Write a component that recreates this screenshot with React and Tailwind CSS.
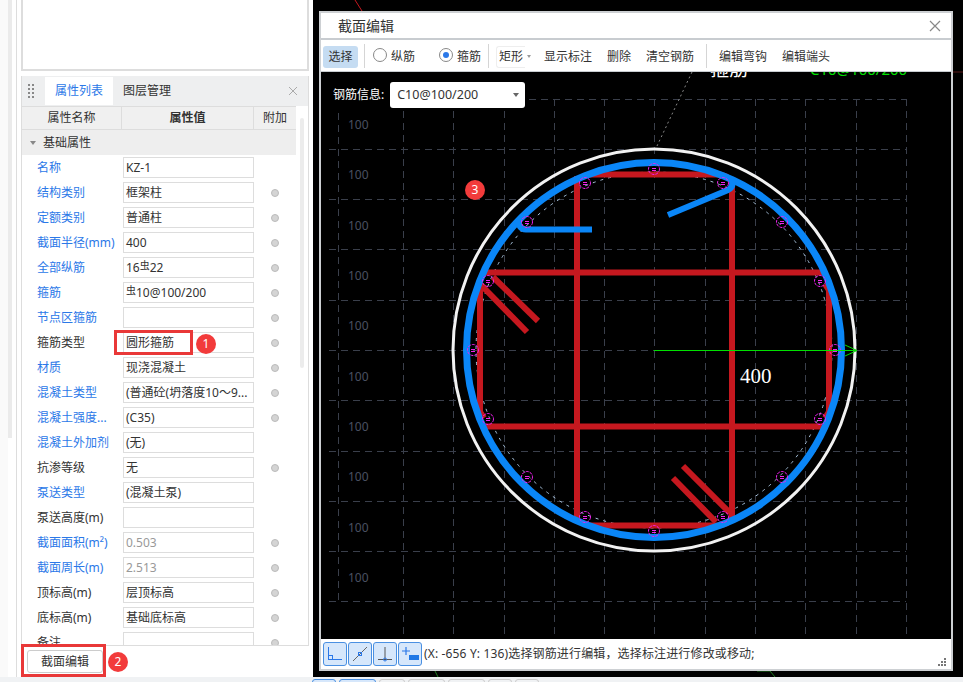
const font = { fontFamily: '"Noto Sans", "Noto Sans CJK SC", sans-serif' }

const rows = [
  { label: '名称', value: 'KZ-1', blue: true },
  { label: '结构类别', value: '框架柱', blue: true, dot: true },
  { label: '定额类别', value: '普通柱', blue: true, dot: true },
  { label: '截面半径(mm)', value: '400', blue: true, dot: true },
  { label: '全部纵筋', value: '16', steel: '22', blue: true, dot: true },
  { label: '箍筋', value: '', steel: '10@100/200', blue: true, dot: true },
  { label: '节点区箍筋', value: '', blue: true, dot: true },
  { label: '箍筋类型', value: '圆形箍筋', dot: true },
  { label: '材质', value: '现浇混凝土', blue: true, dot: true },
  { label: '混凝土类型', value: '(普通砼(坍落度10～9...', blue: true, dot: true },
  { label: '混凝土强度...', value: '(C35)', blue: true, dot: true },
  { label: '混凝土外加剂', value: '(无)', blue: true },
  { label: '抗渗等级', value: '无', dot: true },
  { label: '泵送类型', value: '(混凝土泵)', blue: true },
  { label: '泵送高度(m)', value: '' },
  { label: '截面面积(m²)', value: '0.503', blue: true, dot: true, muted: true },
  { label: '截面周长(m)', value: '2.513', blue: true, dot: true, muted: true },
  { label: '顶标高(m)', value: '层顶标高', dot: true },
  { label: '底标高(m)', value: '基础底标高', dot: true },
  { label: '备注', value: '', dot: true },
]

function PropertyRow({ row }) {
  return (
    <div className="grid h-[25px] shrink-0 grid-cols-[101px_131px_42px] items-center text-[12px]">
      <span className={`pl-[15px] whitespace-nowrap ${row.blue ? 'text-[#2b78e8]' : 'text-[#333333]'}`}>{row.label}</span>
      <div
        className={`flex h-[21px] items-center overflow-hidden whitespace-nowrap border border-[#dddddd] bg-white pl-[2px] ${
          row.muted ? 'text-[#999999]' : 'text-[#333333]'
        }`}
      >
        {row.value}
        {row.steel !== undefined && (
          <>
            <span className="relative top-[-3px] text-[10px] leading-none">虫</span>
            {row.steel}
          </>
        )}
      </div>
      {row.dot ? <span className="ml-[17px] h-[8px] w-[8px] rounded-full border border-[#bbbbbb] bg-[#d4d4d4]" /> : <span />}
    </div>
  )
}

function DragDots() {
  return (
    <div className="grid grid-cols-[2px_2px] gap-[2px]">
      {[0, 1, 2, 3, 4, 5, 6, 7].map((n) => (
        <span key={n} className="h-[2px] w-[2px] bg-[#888888]" />
      ))}
    </div>
  )
}

function LeftPanel() {
  return (
    <div className="flex h-full w-[313px] shrink-0 bg-white">
      <div className="h-full w-[8px] shrink-0 bg-[#fafafa]" />
      <div className="h-[438px] w-[4px] shrink-0 bg-[#ebebeb]" />
      <div className="h-full w-[4px] shrink-0" />
      <div className="h-full w-[1px] shrink-0 bg-[#dddddd]" />
      <div className="h-full w-[4px] shrink-0" />
      <div className="flex w-[288px] shrink-0 flex-col">
        <div className="h-[71px] shrink-0 border-x-2 border-b-2 border-[#dddddd] bg-white" />
        <div className="mt-[5px] flex h-[570px] shrink-0 flex-col overflow-hidden border-x border-b border-[#dddddd]">
          <div className="flex h-[30px] shrink-0 items-center bg-[#eeeff0] text-[12px] text-[#333333]">
            <div className="ml-[6px] w-[17px]">
              <DragDots />
            </div>
            <div className="flex h-[28px] w-[68px] items-center justify-center bg-white text-[#2b78e8]">属性列表</div>
            <div className="ml-[10px]">图层管理</div>
            <svg className="ml-auto mr-[10px]" width="10" height="10" viewBox="0 0 10 10">
              <path d="M1 1l8 8M9 1l-8 8" stroke="#aaaaaa" strokeWidth="1" fill="none" />
            </svg>
          </div>
          <div className="flex min-h-0 flex-1">
            <div className="flex w-[274px] shrink-0 flex-col">
              <div className="grid h-[24px] shrink-0 grid-cols-[100px_132px_42px] items-center border-y border-[#dddddd] bg-[#f0f0f0] text-center text-[12px] text-[#333333]">
                <span className="border-r border-[#dddddd] leading-[22px]">属性名称</span>
                <span className="border-r border-[#dddddd] font-bold leading-[22px]">属性值</span>
                <span>附加</span>
              </div>
              <div className="flex h-[25px] shrink-0 items-center bg-[#eeeeee] pl-[8px] text-[12px] text-[#333333]">
                <span className="mr-[7px] h-0 w-0 border-x-[3px] border-t-[4px] border-x-transparent border-t-[#888888]" />
                基础属性
              </div>
              {rows.map((row) => (
                <PropertyRow key={row.label} row={row} />
              ))}
            </div>
            <div className="ml-[4px] mt-[12px] h-[250px] w-[4px] shrink-0 rounded-full bg-[#ececec]" />
          </div>
        </div>
        <div className="flex flex-1 items-center pl-[6px]">
          <button className="h-[23px] w-[76px] rounded-[3px] border border-[#cccccc] bg-white text-[12px] text-[#333333]">
            截面编辑
          </button>
        </div>
      </div>
    </div>
  )
}

function ToolText({ children, className = '' }) {
  return <span className={`whitespace-nowrap text-[12px] text-[#333333] ${className}`}>{children}</span>
}

function Divider({ className = '' }) {
  return <span className={`relative top-[-1px] h-[24px] w-[1px] shrink-0 bg-[#d5d5d5] ${className}`} />
}

function Toolbar() {
  return (
    <div className="flex h-[34px] shrink-0 items-center border-t-2 border-b border-[#c8ccd0] bg-white pl-[2px] pt-[2px]">
      <span className="flex h-[22px] w-[35px] items-center justify-center rounded-[3px] bg-[#c5dcf2] text-[12px] text-[#333333]">选择</span>
      <Divider className="ml-[6px]" />
      <span className="relative top-[-2px] ml-[8px] h-[14px] w-[14px] rounded-full border border-[#888888] bg-white" />
      <ToolText className="ml-[4px]">纵筋</ToolText>
      <span className="relative top-[-2px] ml-[24px] flex h-[14px] w-[14px] items-center justify-center rounded-full border border-[#888888] bg-white">
        <span className="h-[6px] w-[6px] rounded-full bg-[#2b78e8]" />
      </span>
      <ToolText className="ml-[4px]">箍筋</ToolText>
      <Divider className="ml-[7px]" />
      <span className="ml-[7px] flex h-[22px] w-[29px] items-center rounded-l-[3px] border-y border-l border-[#eeeeee] pl-[2px]">
        <ToolText>矩形</ToolText>
      </span>
      <span className="ml-[2px] h-0 w-0 border-x-[2px] border-t-[3px] border-x-transparent border-t-[#999999]" />
      <ToolText className="ml-[13px]">显示标注</ToolText>
      <ToolText className="ml-[15px]">删除</ToolText>
      <ToolText className="ml-[15px]">清空钢筋</ToolText>
      <Divider className="ml-[12px]" />
      <ToolText className="ml-[12px]">编辑弯钩</ToolText>
      <ToolText className="ml-[15px]">编辑端头</ToolText>
    </div>
  )
}

const gridX = [403, 453, 504, 554, 604, 654, 705, 755, 805, 856, 906]
const gridY = [149, 199, 249, 300, 350, 400, 451, 501, 551, 601]
const labelY = [129, 179, 230, 280, 330, 381, 431, 481, 532, 582]
const steelBars = [
  [654, 169], [585, 183], [527, 222], [488, 281], [473, 350], [488, 419], [527, 477], [585, 517],
  [654, 531], [723, 517], [782, 477], [820, 419], [835, 350], [820, 281], [782, 222], [723, 183],
]

function SectionDrawing() {
  return (
    <svg className="absolute left-0 top-0" width="630" height="567" viewBox="321 72 630 567">
      <g stroke="#3a3f4b" strokeWidth="1" strokeDasharray="7 5" fill="none">
        <path d="M529 99.5H906" />
        {gridY.map((y) => (
          <path key={y} d={`M329 ${y + 0.5}H906`} />
        ))}
        <path d="M338.5 113V605" />
        {gridX.map((x) => (
          <path key={x} d={`M${x + 0.5} 99V639`} />
        ))}
      </g>
      {labelY.map((y) => (
        <text key={y} x="348" y={y} fontSize="12" fill="#4a5060" className="[font-family:'Noto_Sans',sans-serif]">
          100
        </text>
      ))}

      {/* leader and clipped label above the section */}
      <path d="M692 72L657 146" stroke="#888888" strokeWidth="1" strokeDasharray="2 3" fill="none" />
      <text x="710" y="76" fontSize="19" fill="#ffffff" className="[font-family:'Noto_Sans_CJK_SC',sans-serif]">箍筋</text>
      <text x="810" y="75" fontSize="15" fill="#00e000" className="[font-family:'Noto_Sans',sans-serif]">C10@100/200</text>

      <circle cx="654" cy="350" r="201" fill="none" stroke="#f2f2f2" strokeWidth="3" />
      <circle cx="654" cy="350" r="178" fill="none" stroke="#a9c4de" strokeWidth="1" strokeDasharray="3 5" />

      {/* stirrups */}
      <g stroke="#c5181f" strokeWidth="6" fill="none">
        <path d="M590 174.5H720L728 177" />
        <path d="M590 525.5H720L728 523" />
        <path d="M480 412V290L484 284" />
        <path d="M829 412V290L825 284" />
        <path d="M480 412L484 418" />
        <path d="M829 412L825 418" />
        <path d="M486 272.5H822" />
        <path d="M486 426.5H822" />
        <path d="M577 176V522" />
        <path d="M732 178V520" />
        <path d="M483 287L527 332" />
        <path d="M493 277L538 321" />
        <path d="M673 478L716 522" />
        <path d="M683 466L730 513" />
      </g>

      <circle cx="654" cy="350" r="187.5" fill="none" stroke="#0a86f7" strokeWidth="7" />
      <g stroke="#0a86f7" strokeWidth="6" fill="none">
        <path d="M592 229.5H526Q518 229 519 220" />
        <path d="M668 215L728 190Q735 186 731 178" />
      </g>

      {steelBars.map(([x, y]) => (
        <g key={`${x}-${y}`} stroke="#f020f0" fill="none" strokeWidth="1">
          <circle cx={x} cy={y} r="5.5" strokeDasharray="3 1" />
          <path d={`M${x - 2} ${y - 0.5}H${x + 2}M${x - 2} ${y + 1.5}H${x + 2}`} />
        </g>
      ))}

      <path d="M654 350.5H856" stroke="#00e000" strokeWidth="1" />
      <path d="M845 345L857 350.5L845 356" stroke="#00e000" strokeWidth="1" fill="none" />
      <text x="740" y="383" fontSize="21" fill="#ffffff" className="[font-family:'Liberation_Serif',serif]">400</text>
    </svg>
  )
}

function SnapButton({ children }) {
  return (
    <span className="flex h-[24px] w-[24px] shrink-0 items-center justify-center rounded-[3px] border border-[#4a90e2] bg-[#d6e7fb]">
      {children}
    </span>
  )
}

function StatusBar() {
  return (
    <div className="relative flex h-[30px] shrink-0 items-center gap-[1px] bg-white pl-[2px]">
      <SnapButton>
        <svg width="18" height="18" viewBox="0 0 18 18" fill="none" stroke="#2b78e8" strokeWidth="1">
          <path d="M2.5 2V14.5H16" />
          <rect x="2.5" y="10.5" width="4" height="4" />
        </svg>
      </SnapButton>
      <SnapButton>
        <svg width="18" height="18" viewBox="0 0 18 18" fill="none" stroke="#666666" strokeWidth="1">
          <path d="M2 16L16 2" />
          <rect x="7.5" y="7.5" width="3" height="3" stroke="#2b78e8" />
        </svg>
      </SnapButton>
      <SnapButton>
        <svg width="18" height="18" viewBox="0 0 18 18" fill="none" stroke="#555555" strokeWidth="1">
          <path d="M9 2V14M2 14.5H16" />
          <circle cx="9" cy="14.5" r="1.5" stroke="#2b78e8" />
        </svg>
      </SnapButton>
      <SnapButton>
        <svg width="20" height="18" viewBox="0 0 20 18" fill="none">
          <path d="M6 2V10M2 6H10" stroke="#2b78e8" strokeWidth="1.2" />
          <rect x="9" y="10" width="10" height="5" fill="#1f78e6" />
        </svg>
      </SnapButton>
      <span className="ml-[1px] whitespace-nowrap text-[12px] tracking-[0.15px] text-[#333333]">(X: -656 Y: 136)选择钢筋进行编辑，选择标注进行修改或移动;</span>
      <div className="absolute bottom-[3px] right-[5px] grid grid-cols-3 gap-[1px]">
        {[0, 1, 2, 3, 4, 5, 6, 7, 8].map((n) => (
          <span key={n} className={`h-[2px] w-[2px] ${[0, 1, 3].includes(n) ? 'bg-transparent' : 'bg-[#777777]'}`} />
        ))}
      </div>
    </div>
  )
}

function SectionDialog() {
  return (
    <div className="ml-[6px] mt-[11px] flex h-[660px] w-[634px] flex-col border-2 border-[#cdd0d3] bg-white">
      <div className="flex h-[25px] shrink-0 items-center justify-between bg-white pl-[17px] pr-[10px]">
        <span className="text-[14px] text-[#333333]">截面编辑</span>
        <svg width="12" height="12" viewBox="0 0 12 12">
          <path d="M1 1l10 10M11 1L1 11" stroke="#888888" strokeWidth="1.2" fill="none" />
        </svg>
      </div>
      <Toolbar />
      <div className="relative min-h-0 flex-1 overflow-hidden bg-black">
        <SectionDrawing />
        <div className="relative flex items-center pl-[12px] pt-[10px]">
          <span className="text-[12px] text-white">钢筋信息:</span>
          <div className="ml-[6px] flex h-[26px] w-[135px] items-center justify-between rounded-[3px] bg-white pl-[7px] pr-[6px] text-[12.5px] text-[#333333]">
            C10@100/200
            <span className="h-0 w-0 border-x-[3px] border-t-[4px] border-x-transparent border-t-[#666666]" />
          </div>
        </div>
      </div>
      <StatusBar />
    </div>
  )
}

function Marker({ n, className }) {
  return (
    <span className={`absolute flex h-[20px] w-[20px] items-center justify-center rounded-full bg-[#f23b3b] text-[12px] text-white ${className}`}>
      {n}
    </span>
  )
}

export default function App() {
  return (
    <div className="relative flex h-[682px] w-[963px] flex-col overflow-hidden bg-white" style={font}>
      <div className="flex h-[677px] shrink-0">
        <LeftPanel />
        <div className="relative flex-1 bg-black">
          <svg className="absolute left-0 top-0" width="650" height="677" viewBox="313 0 650 677">
            <path d="M355 0L362 11" stroke="#c5181f" strokeWidth="1" fill="none" />
            <path d="M953 72H963" stroke="#5a1a1a" strokeWidth="1" fill="none" />
            <path d="M435 671L438 677" stroke="#1f7a1f" strokeWidth="1" fill="none" />
            <path d="M757 671H770L775 677" stroke="#1f7a1f" strokeWidth="1" fill="none" />
          </svg>
          <div className="relative">
            <SectionDialog />
          </div>
        </div>
      </div>
      <div className="flex h-[5px] shrink-0 items-start gap-[3px] bg-[#f0f2f4] pl-[312px] pt-[2px]">
        <span className="h-[6px] w-[24px] rounded-t-[3px] border border-[#4a90e2] bg-[#d6e7fb]" />
        <span className="h-[6px] w-[37px] rounded-t-[3px] border border-[#4a90e2] bg-[#d6e7fb]" />
        <span className="h-[6px] w-[26px] rounded-t-[3px] border border-[#cccccc]" />
        <span className="h-[6px] w-[37px] rounded-t-[3px] border border-[#cccccc]" />
        <span className="h-[6px] w-[37px] rounded-t-[3px] border border-[#cccccc]" />
        <span className="h-[6px] w-[24px] rounded-t-[3px] border border-[#cccccc]" />
        <span className="h-[6px] w-[24px] rounded-t-[3px] border border-[#cccccc]" />
      </div>

      {/* callouts drawn over the screenshot */}
      <span className="absolute left-[114px] top-[330px] h-[25px] w-[79px] border-[3px] border-[#e93838]" />
      <span className="absolute left-[21px] top-[644px] h-[33px] w-[85px] border-[3px] border-[#e93838]" />
      <Marker n="1" className="left-[196px] top-[334px]" />
      <Marker n="2" className="left-[108px] top-[652px]" />
      <Marker n="3" className="left-[465px] top-[180px]" />
    </div>
  )
}
